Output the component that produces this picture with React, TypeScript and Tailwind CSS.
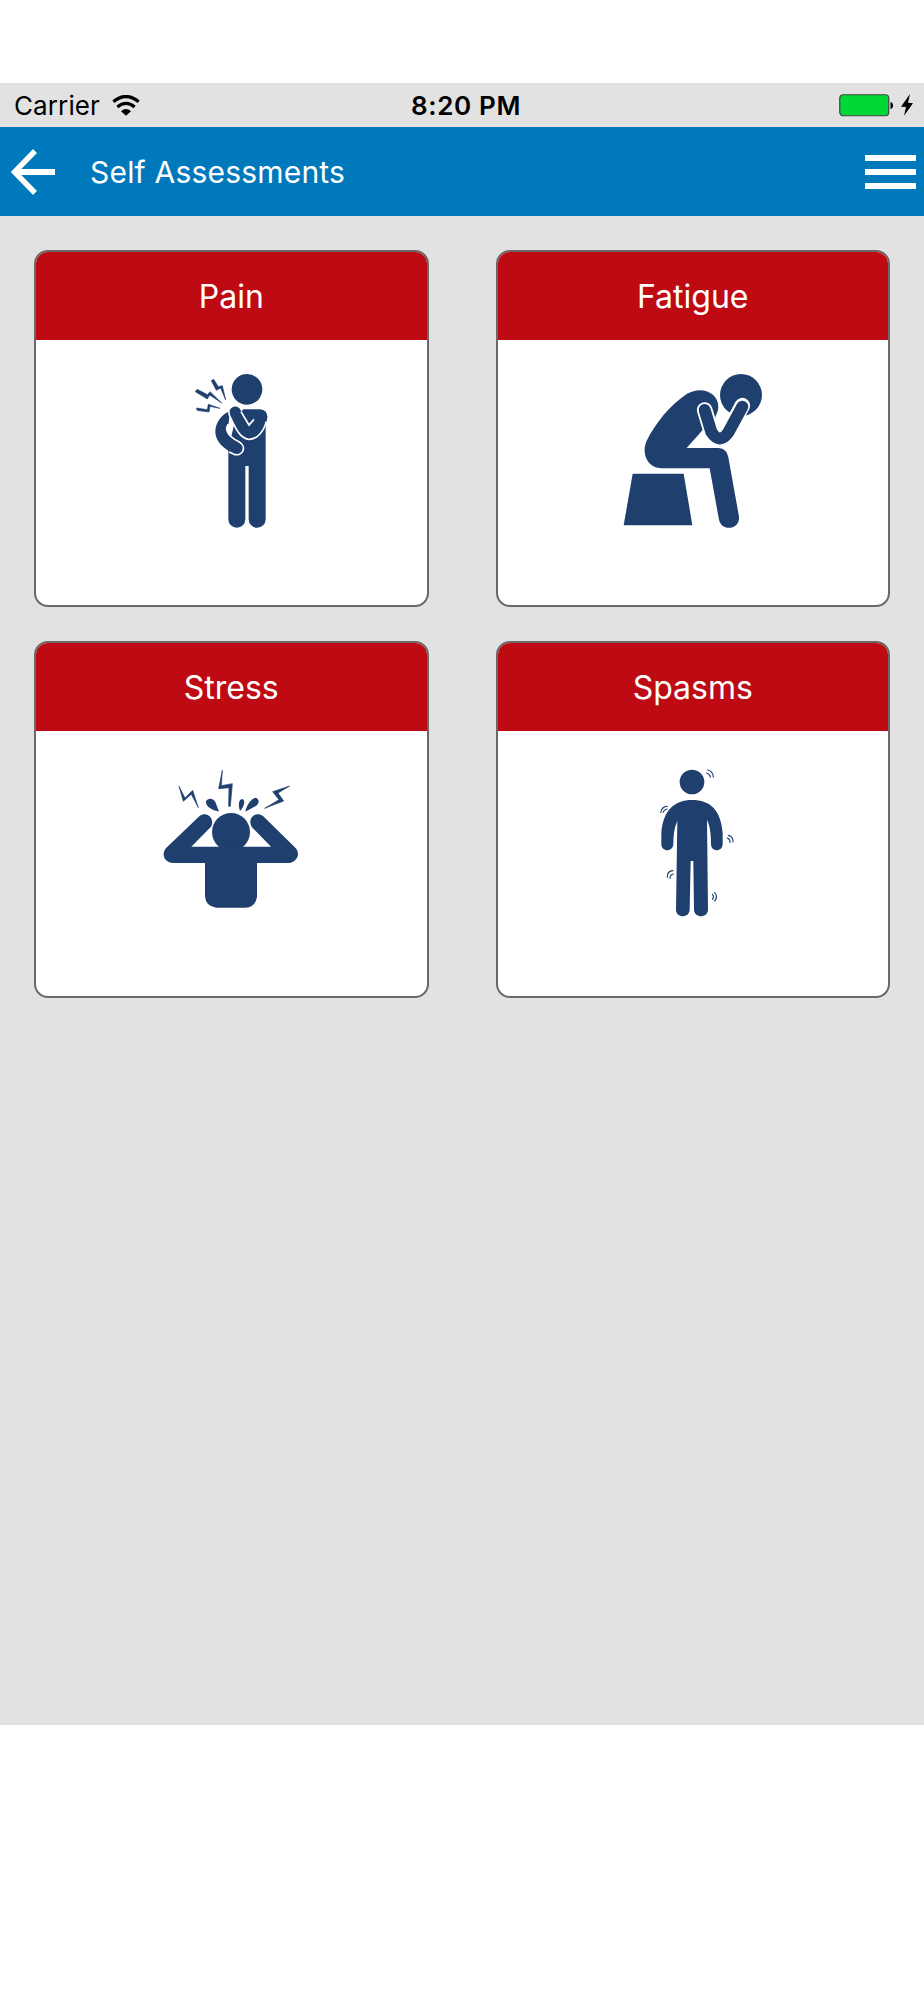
import type { ReactNode } from "react";

interface AssessmentCardProps {
  title: string;
  children: ReactNode;
}

const NAVY = "#1f406e";

const PainIcon = () => (
  <svg width="174" height="180" viewBox="-108 0 522 540" fill={NAVY}>
    <circle cx="201" cy="88" r="46" />
    <g stroke={NAVY} strokeWidth="2">
      <path d="M46 95 L51 88 L83 104 L90 95 L125 129 L89 105 L82 117 Z" />
      <path d="M94 62 L101 58 L115 80 L127 77 L137 120 L122 84 L109 91 Z" />
      <path d="M50 144 L82 149 L85 133 L119 145 L90 139 L87 156 L51 151 Z" />
    </g>
    <path d="M190 148 H240 Q262 150 262 172 L257 198 V478 A25 25 0 0 1 206 478 V318 H196 V478 A25 25 0 0 1 145 478 V270 L165 180 Z" />
    <path d="M150 153 C125 163 106 188 106 214 C106 250 139 270 165 283 C192 289 199 252 178 245 C158 237 139 220 139 205 Q139 198 146 190 Z" />
    <path
      d="M144 193 Q138 203 141 212 C145 228 160 237 178 246 C202 260 188 291 162 283 L147 276"
      fill="none"
      stroke="#fff"
      strokeWidth="5"
    />
    <path d="M139 207 L147 193 L153 215 Z" fill="#fff" />
    <path d="M148 163 C144 140 174 130 182 151 L208 195 L223 178 L262 170 C257 213 231 239 206 238 C177 235 164 201 148 163 Z" />
    <path
      d="M183 155 L207 195 L222 178 M259 184 C251 216 230 239 206 238 C179 235 165 202 148 165 L146 152"
      fill="none"
      stroke="#fff"
      strokeWidth="5"
    />
  </svg>
);

const FatigueIcon = () => (
  <svg width="174" height="180" viewBox="-12 0 522 540" fill={NAVY}>
    <circle cx="393" cy="105" r="63" />
    <path d="M68 341 H221 L247 496 H41 Z" />
    <path d="M230 264 H326 Q351 266 355 292 L387 470 C390 512 330 516 326 474 L299 325 H154 C112 324 93 281 110 242 C137 190 177 138 229 103 C281 71 336 106 323 153 L313 180 L280 208 Z" />
    <path
      d="M284 150 L305 218 Q330 253 354 218 L397 137"
      fill="none"
      stroke="#fff"
      strokeWidth="47"
      strokeLinecap="round"
      strokeLinejoin="round"
    />
    <path
      d="M284 150 L304 216 Q329 254 355 217 L397 140"
      fill="none"
      stroke={NAVY}
      strokeWidth="36"
      strokeLinecap="round"
      strokeLinejoin="round"
    />
  </svg>
);

const StressIcon = () => (
  <svg width="174" height="180" viewBox="-18 -27 522 540" fill={NAVY}>
    <circle cx="243" cy="216" r="57" />
    <path d="M148 169 C172 151 196 178 183 200 L124 260 H205 L243 240 L281 260 H363 L306 202 C290 178 315 151 339 168 L436 263 C455 284 437 309 412 309 H321 V411 Q315 443 286 443 H199 Q167 440 165 409 V309 H70 C43 307 32 282 49 263 Z" />
    <g stroke={NAVY} strokeWidth="2" strokeLinejoin="bevel">
      <path d="M87 79 L105 114 L128 91 L145 143 L124 103 L100 124 Z" />
      <path d="M217 31 L214 77 L247 71 L241 139 L236 139 L237 83 L206 86 Z" />
      <path d="M419 78 L384 99 L401 123 L344 145 L387 119 L368 95 Z" />
    </g>
    <path d="M207 155 C191 152 166 142 168 124 C174 111 192 115 197 128 Z" />
    <path d="M270 153 C264 137 266 118 276 117 C287 119 284 139 270 153 Z" />
    <path d="M286 155 C289 138 301 117 316 113 C330 116 328 132 316 139 Z" />
  </svg>
);

const SpasmsIcon = () => (
  <svg width="174" height="180" viewBox="-102 -27 522 540" fill={NAVY}>
    <circle cx="156" cy="66" r="37" />
    <path d="M156 120 C210 120 243 149 248 220 V252 C248 277 213 277 213 252 C213 222 210 198 201 180 L204 449 C203 475 163 475 162 449 L160 303 H152 L149 449 C148 475 108 475 108 449 L112 183 C102 205 100 229 100 252 C99 277 64 277 64 252 V220 C69 150 104 120 156 120 Z" />
    <g fill="none" stroke={NAVY} strokeWidth="3.5" strokeLinecap="round">
      <path d="M203 30 Q219 34 220 51 M200 39 Q210 42 211 51" />
      <path d="M62 157 Q66 139 82 139 M69 157 Q72 149 81 147" />
      <path d="M265 226 Q280 230 279 246 M262 234 Q271 238 270 247" />
      <path d="M82 352 Q81 333 99 332 M90 355 Q90 344 100 342" />
      <path d="M224 398 Q235 410 224 423 M217 403 Q224 410 217 418" />
    </g>
  </svg>
);

const StatusBar = () => (
  <div className="flex h-11 items-center bg-[#e2e2e2] text-[26px] text-black">
    <div className="flex flex-1 items-center gap-3 pl-[14px]">
      <span className="pt-px tracking-[0.1px]">Carrier</span>
      <svg width="28" height="21" viewBox="0 0 84 63">
        <g fill="none" stroke="#000" strokeWidth="9.5">
          <path d="M4 20 Q42 -11 80 20" />
          <path d="M16 36 Q42 14 68 36" />
        </g>
        <path d="M27 49 Q42 35 57 49 L42 62 Z" />
      </svg>
    </div>
    <span className="pt-px pl-[5px] font-semibold tracking-[0.65px]">8:20 PM</span>
    <div className="flex flex-1 items-center justify-end gap-[7px] pr-[11px]">
      <svg width="55" height="23" viewBox="0 0 55 23">
        <rect x="0.75" y="0.75" width="49" height="21" rx="3.5" fill="#00d935" stroke="#444" strokeWidth="1.2" />
        <path d="M51.5 8 Q54 8.5 54 11.5 Q54 14.5 51.5 15 Z" />
      </svg>
      <svg width="12" height="22" viewBox="0 0 36 66">
        <path d="M27 0 L0 38 L15 39 L9 65 L36 28 L21 26 Z" />
      </svg>
    </div>
  </div>
);

const NavBar = () => (
  <div className="flex h-[89px] items-center bg-[#0079bc] pr-2 pl-[11px] text-white">
    <svg width="45" height="46" viewBox="0 0 45 46" fill="none" stroke="#fff">
      <path d="M24 2 L3.5 23 L24 44" strokeWidth="5.5" />
      <path d="M3 23 H44" strokeWidth="6" />
    </svg>
    <h1 className="ml-[34px] flex-1 pt-[2px] text-[30px] font-normal tracking-[0.2px]">
      Self Assessments
    </h1>
    <div className="flex w-[51px] flex-col gap-2">
      <div className="h-[6px] bg-white" />
      <div className="h-[6px] bg-white" />
      <div className="h-[6px] bg-white" />
    </div>
  </div>
);

const AssessmentCard = (props: AssessmentCardProps) => {
  const { title, children } = props;

  return (
    <div className="h-[357px] overflow-hidden rounded-[14px] border-2 border-[#6b6866] bg-white">
      <div className="flex h-[88px] items-center justify-center bg-[#be0a12] pt-[2px] text-[32px] text-white">
        {title}
      </div>
      <div className="flex justify-center pt-5">{children}</div>
    </div>
  );
};

const App = () => {
  return (
    <div className="h-[2000px] w-[924px] bg-white pt-[83px] font-['Inter','Liberation_Sans',sans-serif]">
      <StatusBar />
      <NavBar />
      <div className="h-[1509px] bg-[#e2e2e2] px-[34px] pt-[34px]">
        <div className="grid grid-cols-2 gap-x-[67px] gap-y-[34px]">
          <AssessmentCard title="Pain">
            <PainIcon />
          </AssessmentCard>
          <AssessmentCard title="Fatigue">
            <FatigueIcon />
          </AssessmentCard>
          <AssessmentCard title="Stress">
            <StressIcon />
          </AssessmentCard>
          <AssessmentCard title="Spasms">
            <SpasmsIcon />
          </AssessmentCard>
        </div>
      </div>
    </div>
  );
};

export default App;
